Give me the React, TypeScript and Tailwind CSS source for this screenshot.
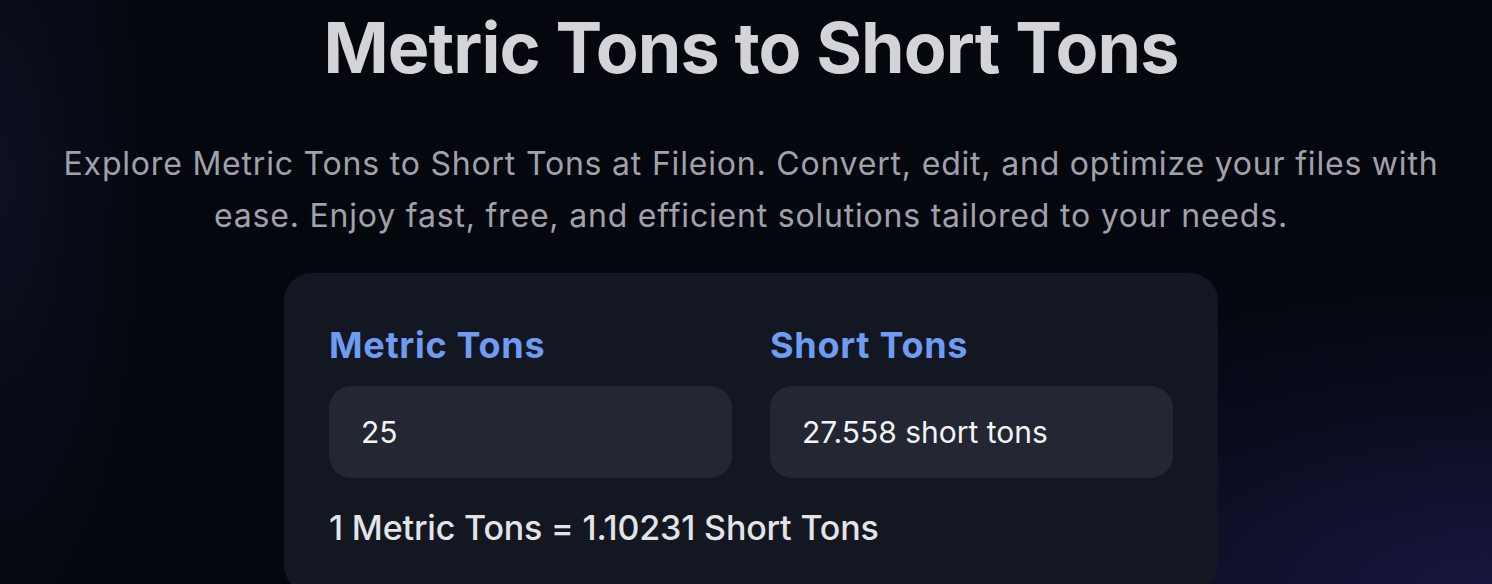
const App = () => {
  return (
    <div
      className="min-h-screen w-full overflow-hidden bg-[#05070f] bg-[radial-gradient(ellipse_60%_70%_at_100%_100%,#17163f_0%,rgba(23,22,63,0.35)_45%,transparent_75%),radial-gradient(ellipse_10%_80%_at_0%_30%,#0d1120_0%,transparent_100%)] text-center"
      style={{ fontFamily: "Inter, 'Noto Sans', sans-serif" }}
    >
      <div className="pl-[10px] pt-[13px]">
        <h1 className="text-[70px] leading-none font-bold tracking-[-0.013em] text-[#d4d4d8]">
          Metric Tons to Short Tons
        </h1>
        <p className="mx-auto mt-[55px] max-w-[1470px] text-[32px] leading-[52px] tracking-[0.025em] text-[#a1a1aa]">
          Explore Metric Tons to Short Tons at Fileion. Convert, edit, and optimize your files with
          <br />
          ease. Enjoy fast, free, and efficient solutions tailored to your needs.
        </p>
        <div className="mx-auto mt-[31px] w-[934px] rounded-[28px] bg-[#131722] px-[45px] pt-[50px] pb-[40px] text-left">
          <div className="grid grid-cols-2 gap-[38px]">
            <div>
              <label className="block text-[36px] leading-[44px] font-bold tracking-[0.02em] text-[#6f9cf0]">Metric Tons</label>
              <input
                defaultValue="25"
                className="mt-[19px] h-[92px] w-full rounded-[22px] bg-[#222733] px-[32px] text-[30px] text-[#f4f4f5] outline-none"
              />
            </div>
            <div>
              <label className="block text-[36px] leading-[44px] font-bold tracking-[0.02em] text-[#6f9cf0]">Short Tons</label>
              <div className="mt-[19px] flex h-[92px] w-full items-center rounded-[22px] bg-[#222733] px-[32px] text-[30px] text-[#f4f4f5]">
                27.558 short tons
              </div>
            </div>
          </div>
          <p className="mt-[24px] text-[34px] leading-[51px] font-medium tracking-[-0.005em] text-[#e4e4e7]">
            1 Metric Tons = 1.10231 Short Tons
          </p>
        </div>
      </div>
    </div>
  );
};

export default App;
